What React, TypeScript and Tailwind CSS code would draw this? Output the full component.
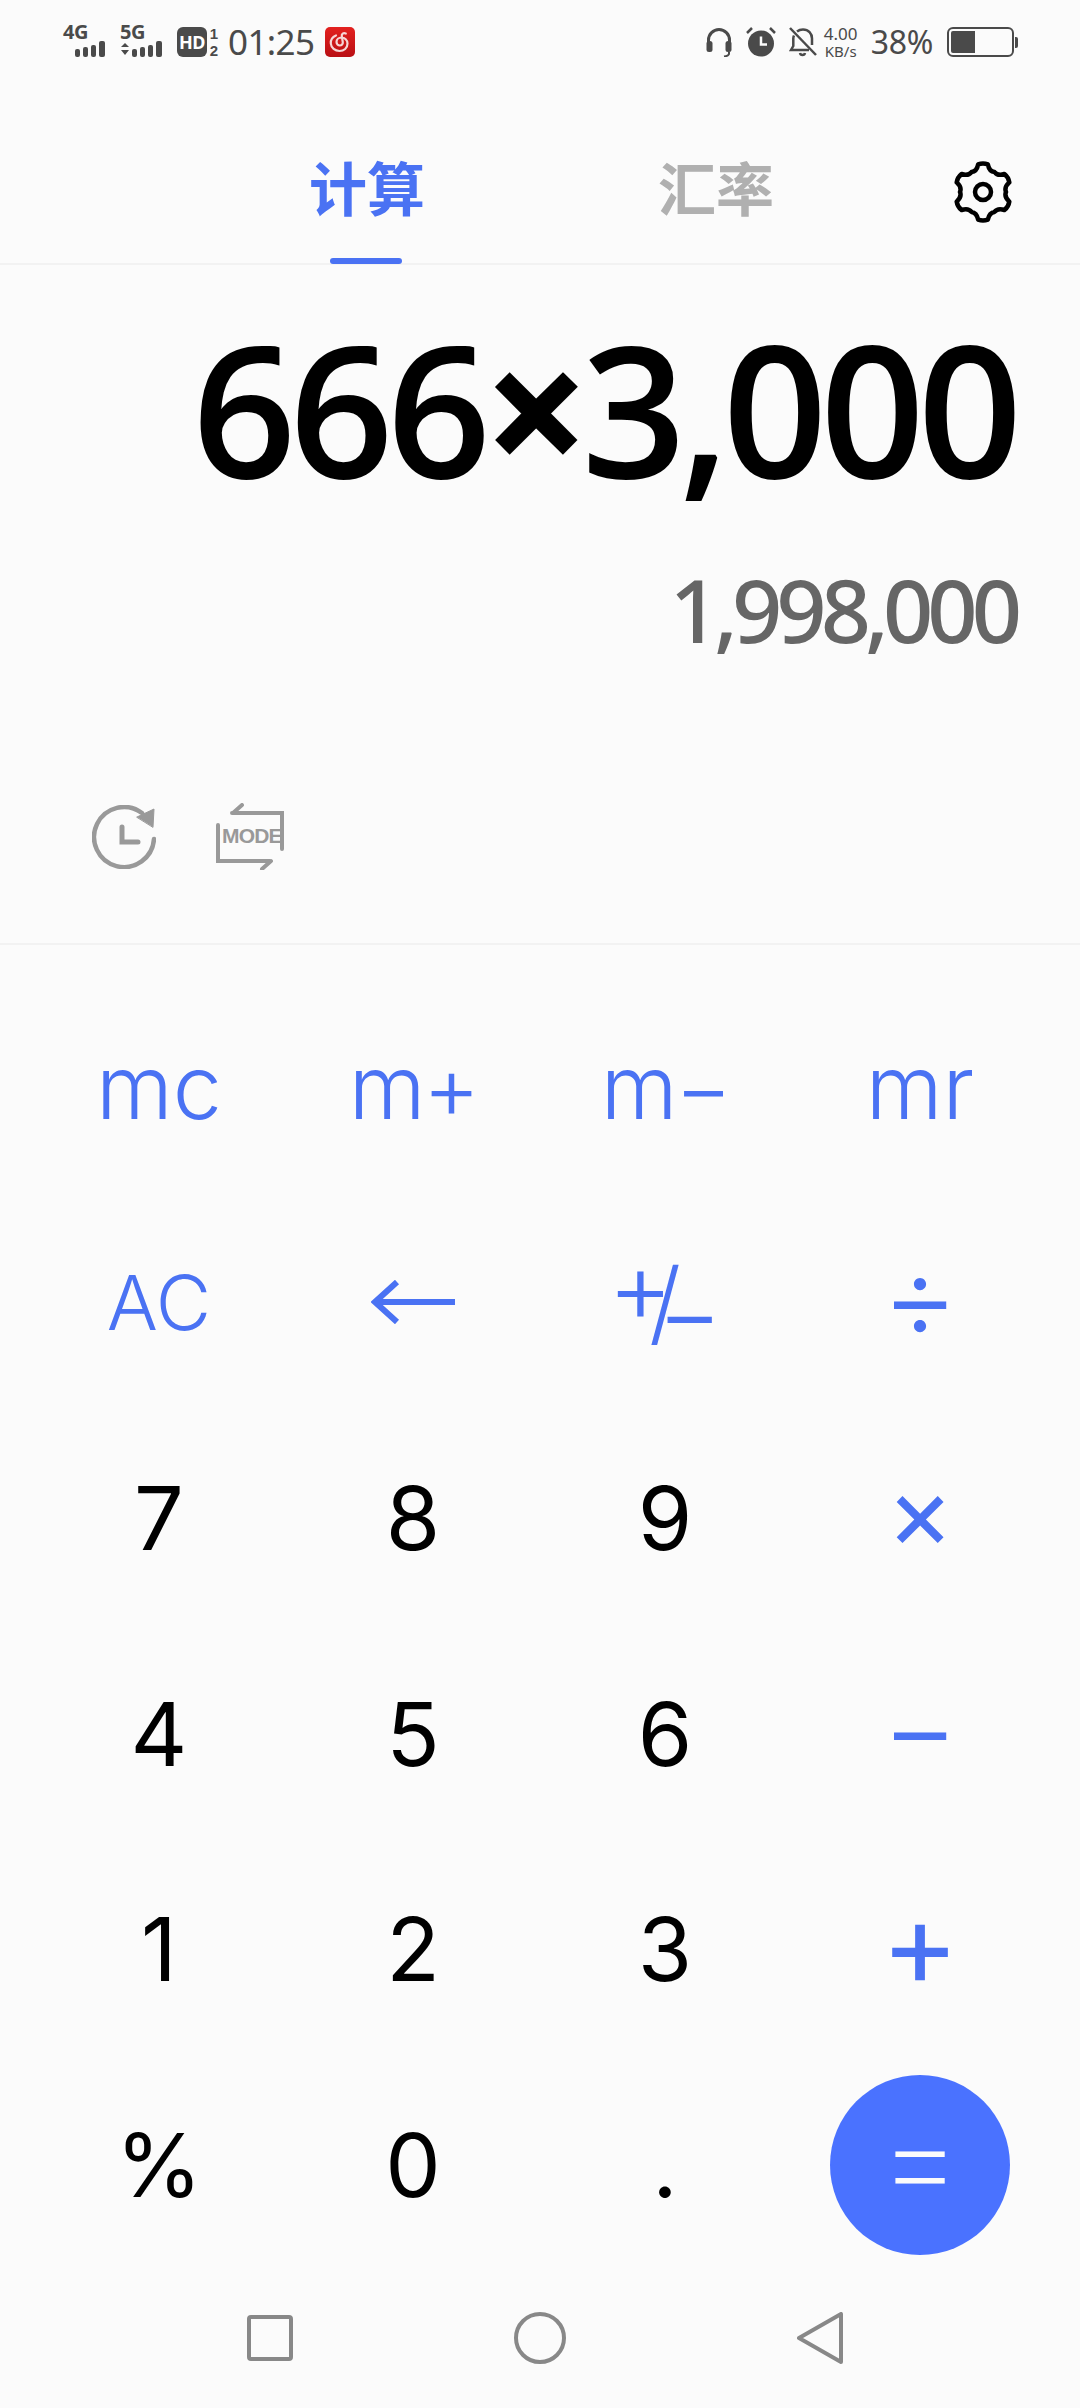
import { ReactNode } from "react";

const BLUE = "text-[#4a72f3]";

// six-tooth gear outline, teeth at top and bottom
const gearPath = () => {
  const p = (deg: number, r: number) => {
    const a = (deg * Math.PI) / 180;
    return `${(30 + r * Math.cos(a)).toFixed(2)} ${(30 + r * Math.sin(a)).toFixed(2)}`;
  };
  let d = `M${p(-100, 28)}`;
  for (let i = 0; i < 6; i++) {
    const a = -90 + i * 60;
    d += ` Q${p(a, 29.5)} ${p(a + 10, 28)}`;
    d += ` Q${p(a + 17, 21.5)} ${p(a + 30, 23)}`;
    d += ` Q${p(a + 43, 21.5)} ${p(a + 50, 28)}`;
  }
  return d + "Z";
};

const Signal = ({ label, arrows }: { label: string; arrows?: boolean }) => (
  <div className="relative w-[47px] h-[32px]">
    <span className="absolute left-0 top-[-4px] text-[20px] leading-[20px] font-bold tracking-[-0.5px] text-[#4a4a4a]">{label}</span>
    <svg className="absolute left-0 top-0" width="47" height="32" viewBox="0 0 47 32">
      {arrows && <path d="M1 21l4-4 4 4zM1 24l4 5 4-5z" fill="#4a4a4a" />}
      <rect x="12" y="23" width="5" height="8" rx="2" fill="#4a4a4a" />
      <rect x="20" y="21" width="5" height="10" rx="2" fill="#4a4a4a" />
      <rect x="28" y="19" width="5" height="12" rx="2" fill="#4a4a4a" />
      <rect x="36" y="15" width="6" height="16" rx="2" fill="#4a4a4a" />
    </svg>
  </div>
);

const StatusBar = () => (
  <div className="h-[84px] flex items-center pl-[63px] pr-[62px] text-[#4a4a4a] font-['Noto_Sans',sans-serif]">
    <Signal label="4G" />
    <div className="w-[10px]" />
    <Signal label="5G" arrows />
    <div className="ml-[10px] w-[30px] h-[30px] rounded-[6px] bg-[#4a4a4a] text-white text-[18px] leading-[30px] font-bold text-center tracking-[-0.5px]">
      HD
    </div>
    <div className="ml-[2px] w-[10px] flex flex-col items-center font-['Liberation_Sans',sans-serif] text-[15px] leading-[17px] font-bold">
      <span>1</span>
      <span>2</span>
    </div>
    <span className="ml-[9px] text-[35px] leading-[40px] tracking-[-0.6px]">01:25</span>
    <div className="ml-[11px] w-[30px] h-[30px] rounded-[5px] bg-gradient-to-b from-[#e3211f] to-[#b90f14] flex items-center justify-center">
      <svg width="24" height="24" viewBox="0 0 24 24" fill="none" stroke="#f6d6d6" strokeWidth="2.200" strokeLinecap="round">
        <path d="M8 5.500C4.500 7 2.500 10 2.800 13.500 3.200 18 7 21 11.500 21c4.500 0 8-3 8-7.500 0-3.500-2.800-6-6-6-2.800 0-5 2-5 4.500 0 2 1.500 3.500 3.300 3.500 2 0 3.200-1.500 3-3.300L13.800 6c-.4-2 1.500-3.500 4-2.500" />
      </svg>
    </div>
    <div className="flex-1" />
    <svg width="26" height="30" viewBox="0 0 26 30" fill="none">
      <path d="M2.500 16v-3a10.500 10.500 0 0 1 21 0v3" stroke="#4a4a4a" strokeWidth="3" />
      <rect x="0.500" y="14" width="6" height="11" rx="2.500" fill="#4a4a4a" />
      <rect x="19.500" y="14" width="6" height="11" rx="2.500" fill="#4a4a4a" />
      <path d="M23 25v1.500c0 1.500-1.500 2.500-5 3" stroke="#4a4a4a" strokeWidth="2" />
    </svg>
    <svg className="ml-[14px]" width="30" height="30" viewBox="0 0 30 30" fill="none">
      <circle cx="15" cy="16.500" r="13" fill="#4a4a4a" />
      <path d="M15 9.500v8h6" stroke="#fbfbfb" strokeWidth="2.500" />
      <path d="M1 6l5-5M29 6l-5-5" stroke="#4a4a4a" strokeWidth="2.500" />
    </svg>
    <svg className="ml-[13px]" width="28" height="30" viewBox="0 0 28 30" fill="none" stroke="#4a4a4a" strokeWidth="2.500">
      <path d="M5 8.500c-.5 1-.7 2-.7 3V19l-2.300 4h18M8 4.500c1.600-1.300 3.500-2 6-2 5.500 0 9 4 9 9V18" />
      <path d="M1 1l26 27" />
      <path d="M11 26c.5 2.500 4.500 2.500 5 0" />
    </svg>
    <div className="ml-[6px] w-[36px] flex flex-col items-center text-[17px] leading-[19px]">
      <span>4.00</span>
      <span className="text-[15px] leading-[17px]">KB/s</span>
    </div>
    <span className="ml-[12px] text-[32px] leading-[40px] tracking-[-0.3px]">38%</span>
    <div className="ml-[14px] flex items-center">
      <div className="w-[67px] h-[30px] rounded-[6px] border-2 border-[#4a4a4a] p-[2px]">
        <div className="w-[24px] h-full bg-[#4a4a4a] rounded-l-[2px]" />
      </div>
      <div className="ml-[1px] w-[3px] h-[11px] bg-[#4a4a4a] rounded-r-[2px]" />
    </div>
  </div>
);

const Tabs = () => (
  <div className="h-[181px] flex border-b-2 border-[#f2f2f2] font-['Noto_Sans_CJK_SC',sans-serif] font-bold text-[58px] leading-[70px]">
    <div className="relative w-[367px]">
      <span className={`absolute right-[-58px] top-[67px] ${BLUE}`}>计算</span>
      <div className="absolute right-[-35px] bottom-[-1px] w-[72px] h-[6px] rounded-full bg-[#4a72f3]" />
    </div>
    <div className="relative ml-[348px]">
      <span className="absolute left-[-57px] top-[67px] w-[120px] text-[#b0b0b0]">汇率</span>
    </div>
    <svg className="ml-[238px] mt-[77px]" width="60" height="62" viewBox="0 -1 60 62" fill="none" stroke="#000" strokeWidth="4.500" strokeLinejoin="round">
      <path d={gearPath()} />
      <circle cx="30" cy="30" r="8" />
    </svg>
  </div>
);

const Display = () => (
  <div className="h-[680px] flex flex-col border-b-2 border-[#f2f2f2] font-['Noto_Sans',sans-serif]">
    <div className="pr-[64px] pt-[36px] text-right text-[180px] leading-[214px] font-medium text-black tracking-[-5.500px] [-webkit-text-stroke:2px_black]">
      666<span className="font-bold">×</span>3,000
    </div>
    <div className="pr-[64px] mt-[41px] text-right text-[88px] leading-[106px] font-medium text-[#666666] tracking-[-6px]">
      1,998,000
    </div>
    <div className="mt-[141px] pl-[92px] flex items-center gap-[60px]">
      <svg width="64" height="64" viewBox="0 0 64 64" fill="none" stroke="#999" strokeWidth="4.500" strokeLinecap="round">
        <path d="M62 34a30 30 0 1 1-12-26" />
        <path d="M45 12l17-8-1 18z" fill="#999" strokeWidth="1" strokeLinejoin="round" />
        <path d="M30 22v15h16" strokeWidth="5" />
      </svg>
      <div className="relative w-[68px] h-[67px]">
        <svg className="absolute inset-0" width="68" height="67" viewBox="0 0 68 67" fill="none" stroke="#999" strokeWidth="4" strokeLinecap="round">
          <path d="M66 46V10H16M26 2l-9 8" />
          <path d="M2 22v36h52M46 66l9-8" />
        </svg>
        <span className="absolute left-[6px] top-[21px] font-['Liberation_Sans',sans-serif] text-[21px] leading-[24px] font-bold text-[#999] tracking-[-0.8px]">
          MODE
        </span>
      </div>
    </div>
  </div>
);

const Key = ({ children, blue, className = "" }: { children: ReactNode; blue?: boolean; className?: string }) => (
  <div className={`flex items-center justify-center ${blue ? BLUE : "text-black"} ${className}`}>{children}</div>
);

const Keypad = () => (
  <div className="grid grid-cols-[254px_254px_250px_260px] grid-rows-[repeat(6,215.6px)] pl-[32px] pt-[34px] font-['Inter',sans-serif] text-[88px] leading-none">
    <Key blue className="font-light">mc</Key>
    <Key blue className="font-light tracking-[-3px]">m+</Key>
    <Key blue className="font-light tracking-[-3px]">m−</Key>
    <Key blue className="font-light">mr</Key>
    <Key blue className="font-light text-[76px]">AC</Key>
    <Key blue>
      <svg width="84" height="44" viewBox="0 0 84 44" fill="none" stroke="#4a72f3" strokeWidth="6">
        <path d="M4 22h80M26 2L4 22l22 20" />
      </svg>
    </Key>
    <Key blue className="font-light">
      <span className="text-[100px] -translate-y-[16px] mr-[-24px]">+</span>
      <span className="text-[92px]">/</span>
      <span className="text-[100px] translate-y-[10px] ml-[-24px]">−</span>
    </Key>
    <Key blue className="text-[118px] font-light pb-[12px]">÷</Key>
    <Key>7</Key>
    <Key>8</Key>
    <Key>9</Key>
    <Key blue className="text-[102px] font-normal pb-[12px]">×</Key>
    <Key>4</Key>
    <Key>5</Key>
    <Key>6</Key>
    <Key blue className="text-[118px] font-light pb-[14px]">−</Key>
    <Key>1</Key>
    <Key>2</Key>
    <Key>3</Key>
    <Key blue className="text-[118px] font-normal pb-[12px]">+</Key>
    <Key>%</Key>
    <Key>0</Key>
    <Key>.</Key>
    <Key>
      <div className="w-[180px] h-[180px] rounded-full bg-[#4a72ff] flex items-center justify-center text-[#fbfbfb] text-[132px] font-extralight pb-[16px]">=</div>
    </Key>
  </div>
);

const NavBar = () => (
  <div className="flex-1 flex items-center pb-[4px]">
    <div className="ml-[247px] w-[46px] h-[46px] rounded-[4px] border-[4px] border-[#888888]" />
    <div className="ml-[221px] w-[52px] h-[52px] rounded-full border-[4px] border-[#888888]" />
    <svg className="ml-[231px]" width="46" height="52" viewBox="0 0 46 52" fill="none" stroke="#888" strokeWidth="4" strokeLinejoin="round">
      <path d="M44 2v48L2 26z" />
    </svg>
  </div>
);

export default function App() {
  return (
    <div className="w-[1080px] h-[2408px] bg-[#fbfbfb] flex flex-col overflow-hidden">
      <StatusBar />
      <Tabs />
      <Display />
      <Keypad />
      <NavBar />
    </div>
  );
}
